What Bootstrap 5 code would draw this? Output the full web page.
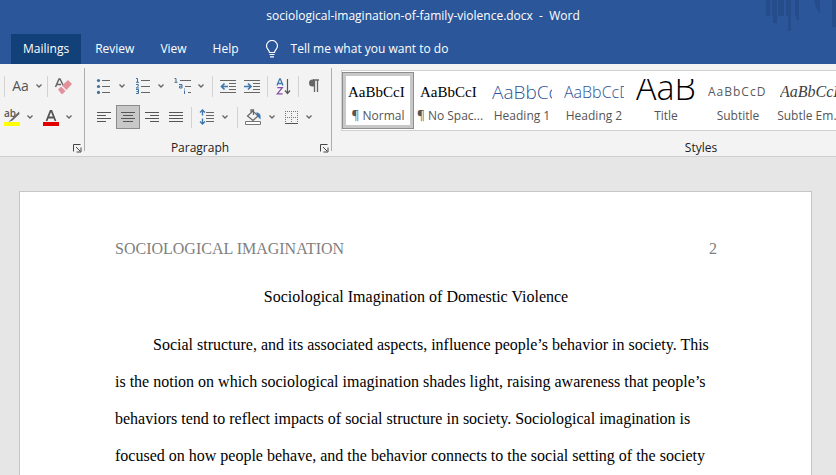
<!DOCTYPE html>
<html lang="en">
<head>
<meta charset="utf-8">
<meta name="viewport" content="width=device-width, initial-scale=1">
<title>sociological-imagination-of-family-violence.docx - Word</title>
<link href="https://cdn.jsdelivr.net/npm/bootstrap@5.3.0/dist/css/bootstrap.min.css" rel="stylesheet">
<style>
  body { font: 12px/16px "Open Sans", "Noto Sans", sans-serif; background: #e6e6e6; color: #444; }
  .app-top { background: #2b579a; color: #fff; }
  .doc-name { height: 34px; padding-left: 10px; line-height: 32px; white-space: pre; }
  .skyline { position: absolute; top: 0; right: 0; }
  .tab-row { padding-left: 11px; gap: 2px; }
  .tab-row .nav-link { color: #fff; line-height: 30px; padding: 0 12px; border-radius: 0; }
  .tab-row .nav-link.active { background: #124078; color: #fff; }
  .tell-me { border: 0; background: none; color: #fff; padding: 0 0 0 12px; gap: 12px; line-height: 30px; }
  .ribbon { background: #f3f3f3; border-bottom: 1px solid #cfcfcf; height: 93px; }
  .tool-group { padding-top: 10px; }
  .tool-rows { gap: 7px; }
  .font-group { width: 84px; }
  .para-group { width: 246px; }
  .para-group .tool-rows { padding-left: 7px; }
  .group-rule { width: 1px; background: #adadad; margin: 4px 0 5px; flex: none; }
  .tool-rule { width: 1px; height: 21px; background: #d2d2d2; margin: 0 3px; }
  .tool { width: 24px; height: 24px; border: 1px solid transparent; background: none; padding: 0; color: #555; display: flex; align-items: center; justify-content: center; flex: none; }
  .tool.pressed { background: #c8c8c8; border-color: #8c8c8c; }
  .tool-drop { width: 39px; justify-content: flex-start; padding-left: 3px; gap: 6px; }
  .case-text { font-size: 14px; width: 17px; }
  .tool svg, .launcher svg { display: block; flex: none; }
  .group-foot { padding-top: 10px; color: #222; line-height: 18px; }
  .launcher { position: absolute; right: 2px; top: 15px; border: 0; padding: 0; background: none; }
  .styles-group { flex: 0 0 738px; padding-top: 6px; }
  .gallery { background: #fff; border: 1px solid #d0d0d0; margin-left: 9px; padding: 1px 0; }
  .style-item { width: 72px; height: 57px; border: 1px solid transparent; background: none; padding: 6px 5px 4px; flex: none; color: #555; }
  .style-item.chosen { border-color: #8e8e8e; box-shadow: inset 0 0 0 3px #c8c8c8; }
  .sample { display: block; height: 26px; overflow: hidden; line-height: 26px; white-space: nowrap; text-align: left; }
  .style-name { display: block; white-space: nowrap; line-height: 22px; margin: 0 -5px; }
  .s-serif { font: 15px/26px "Liberation Serif", serif; color: #000; }
  .s-h1 { font: 300 19px/26px "Open Sans", sans-serif; color: #2f5496; }
  .s-h2 { font: 300 16px/26px "Open Sans", sans-serif; color: #2f5496; }
  .s-title { font: 300 34px/16px "Open Sans", sans-serif; color: #000; }
  .s-sub { font-size: 12px; letter-spacing: 1px; color: #5a5a5a; }
  .s-em { font: italic 16px/26px "Liberation Serif", serif; color: #404040; }
  .styles-foot { line-height: 18px; padding-top: 8px; color: #222; }
  .sheet { background: #fff; border: 1px solid #c6c6c6; border-bottom: 0; margin: 34px 24px 0 19px; padding: 46px 94px 0 95px; color: #000; font: 16px/37px "Liberation Serif", "Times New Roman", serif; }
  .running-head { color: #808080; line-height: 22px; margin-bottom: 18px; }
  .sheet h1 { font: inherit; margin: 0 0 11px; }
  .sheet p { text-indent: 38px; margin: 0; }
</style>
<script src="https://cdn.jsdelivr.net/npm/bootstrap@5.3.0/dist/js/bootstrap.bundle.min.js"></script>
</head>
<body>
<svg class="d-none" aria-hidden="true">
  <symbol id="caret" viewBox="0 0 8 8"><path d="M1.5 2.5 4 5l2.500-2.500" fill="none" stroke="#666" stroke-width="1.300"/></symbol>
  <symbol id="launch" viewBox="0 0 9 9"><path d="M.5 7.500V.5H7.500M3 3l4 4M8 3.500V8H3.500" fill="none" stroke="#444"/></symbol>
</svg>
<div class="vh-100 d-flex flex-column overflow-hidden">
  <header class="app-top position-relative">
    <svg class="skyline" width="72" height="34" fill="#264d8b" aria-hidden="true"><path d="M2 0h4v16H2zM8 0h5v23H9v-7H8zM14 0h6v16h-6zM22 0h5v31h-3V16h-2zM31 0h4v20h-3v-4h-1zM50 0h6v14l-4-6zM68 0h4v27h-4z"/></svg>
    <div class="doc-name text-center">sociological-imagination-of-family-violence.docx  -  Word</div>
    <nav class="tab-row nav">
      <a class="nav-link active" href="#" aria-current="page">Mailings</a>
      <a class="nav-link" href="#">Review</a>
      <a class="nav-link" href="#">View</a>
      <a class="nav-link" href="#">Help</a>
      <button type="button" class="tell-me d-flex align-items-center">
        <svg width="14" height="18" viewBox="0 0 14 18" fill="none" stroke="#fff" stroke-width="1.200" aria-hidden="true"><path d="M4.500 12.500c0-2.500-3-3.500-3-6.500a5.500 5.500 0 0 1 11 0c0 3-3 4-3 6.500zM4.500 14.500h5M5 16.800h4"/></svg>
        <span>Tell me what you want to do</span>
      </button>
    </nav>
  </header>

  <section class="ribbon d-flex overflow-hidden flex-shrink-0" aria-label="Ribbon">
    <div class="tool-group font-group flex-shrink-0">
      <div class="tool-rows d-flex flex-column">
        <div class="d-flex align-items-center">
          <span class="ps-1"></span><span class="tool-rule ms-0"></span>
          <button type="button" class="tool tool-drop" aria-label="Change case"><span class="case-text">Aa</span><svg width="8" height="8"><use href="#caret"/></svg></button>
          <span class="tool-rule ms-0"></span>
          <button type="button" class="tool" aria-label="Clear formatting"><svg width="18" height="16" viewBox="0 0 18 16"><path d="M1.500 9 5 1h1l3 6M3 6.500h4" fill="none" stroke="#666" stroke-width="1.500"/><path d="m4 11.500 3-3 4.500 4.500-3 3h-1zM8 7.500l6-5.500 4 4-5.500 6z" fill="#e2909b"/></svg></button>
        </div>
        <div class="d-flex align-items-center">
          <button type="button" class="tool tool-drop" aria-label="Text highlight colour"><svg width="16" height="17" viewBox="0 0 16 17"><path d="M0 13h16v4H0z" fill="#ff0"/><text x="0" y="8" font-size="10" font-weight="600" fill="#555">ab</text><path d="m15 2.500-6 6-4.500 4.500 4-1.500L15.500 5z" fill="#666"/></svg><svg width="8" height="8"><use href="#caret"/></svg></button>
          <button type="button" class="tool tool-drop" aria-label="Font colour"><svg width="16" height="17" viewBox="0 0 16 17"><path d="M0 13h16v4H0z" fill="#e00000"/><path d="M3.500 12 7.500 2h1L12.500 12M5 8.500h6" fill="none" stroke="#555" stroke-width="1.800"/></svg><svg width="8" height="8"><use href="#caret"/></svg></button>
        </div>
      </div>
      <div class="group-foot position-relative">&nbsp;<button type="button" class="launcher" aria-label="Font settings"><svg width="9" height="9"><use href="#launch"/></svg></button></div>
    </div>
    <div class="group-rule"></div>

    <div class="tool-group para-group flex-shrink-0">
      <div class="tool-rows d-flex flex-column">
        <div class="d-flex align-items-center">
          <button type="button" class="tool tool-drop" aria-label="Bullets"><svg width="16" height="16" viewBox="0 0 16 16"><path d="M6 2.500h8M6 8.500h8M6 14.500h8" stroke="#666"/><g fill="#41719c"><circle cx="2.500" cy="2.500" r="1.600"/><circle cx="2.500" cy="8.500" r="1.600"/><circle cx="2.500" cy="14.400" r="1.600"/></g></svg><svg width="8" height="8"><use href="#caret"/></svg></button>
          <button type="button" class="tool tool-drop" aria-label="Numbering"><svg width="16" height="16" viewBox="0 0 16 16"><path d="M6 2.500h9M6 8.500h9M6 14.500h9" stroke="#666"/><path d="M1 .5h1.500V4M1 4.300h3M1 6.500h2.300v1.700L1.200 10H4M1 11.500h2.500v4H1M1.500 13.500h2" fill="none" stroke="#41719c"/></svg><svg width="8" height="8"><use href="#caret"/></svg></button>
          <button type="button" class="tool tool-drop" aria-label="Multilevel list"><svg width="17" height="16" viewBox="0 0 17 16"><path d="M6 2.500h11M11 8.500h6M14 14.500h3" stroke="#666"/><path d="M.5 .5H2V4M.5 4.300h3M5 6.500h3V10H5.500V8.200H8M10.500 12.500V16M10.500 10.500v1" fill="none" stroke="#41719c"/></svg><svg width="8" height="8"><use href="#caret"/></svg></button>
          <span class="tool-rule"></span>
          <button type="button" class="tool" aria-label="Decrease indent"><svg width="16" height="16" viewBox="0 0 16 16"><path d="M0 2.500h16M9 5.500h7M9 8.500h7M9 11.500h7M0 14.500h16" stroke="#666"/><path d="M8 8.500H1.500M4.500 5.500l-3 3 3 3" fill="none" stroke="#3f78ad" stroke-width="1.700"/></svg></button>
          <button type="button" class="tool" aria-label="Increase indent"><svg width="16" height="16" viewBox="0 0 16 16"><path d="M0 2.500h16M9 5.500h7M9 8.500h7M9 11.500h7M0 14.500h16" stroke="#666"/><path d="M0 8.500h6.500M4 5.500l3 3-3 3" fill="none" stroke="#3f78ad" stroke-width="1.700"/></svg></button>
          <span class="tool-rule"></span>
          <button type="button" class="tool" aria-label="Sort"><svg width="15" height="17" viewBox="0 0 15 17" fill="none"><path d="M1 7.500 3.700.8h.6L7 7.500M2 5.500h4" stroke="#3f78ad" stroke-width="1.300"/><path d="M1.300 9.600h5L1.300 15.800h5.400" stroke="#8a4fa8" stroke-width="1.300"/><path d="M11.500 1v14M9 12.500l2.500 3 2.500-3" stroke="#555" stroke-width="1.200"/></svg></button>
          <span class="tool-rule"></span>
          <button type="button" class="tool" aria-label="Show paragraph marks"><svg width="12" height="14" viewBox="0 0 12 14"><path d="M5 1h6M6.500 1v12M9.500 1v12" fill="none" stroke="#666" stroke-width="1.300"/><path d="M6 .4H4.500a3.300 3.300 0 0 0 0 7H6z" fill="#666"/></svg></button>
        </div>
        <div class="d-flex align-items-center">
          <button type="button" class="tool" aria-label="Align left"><svg width="14" height="12" viewBox="0 0 14 12" stroke="#555"><path d="M0 1.500h14M0 4.500h9M0 7.500h14M0 10.500h9"/></svg></button>
          <button type="button" class="tool pressed" aria-label="Center" aria-pressed="true"><svg width="14" height="12" viewBox="0 0 14 12" stroke="#555"><path d="M0 1.500h14M2 4.500h10M0 7.500h14M2 10.500h10"/></svg></button>
          <button type="button" class="tool" aria-label="Align right"><svg width="14" height="12" viewBox="0 0 14 12" stroke="#555"><path d="M0 1.500h14M5 4.500h9M0 7.500h14M5 10.500h9"/></svg></button>
          <button type="button" class="tool" aria-label="Justify"><svg width="14" height="12" viewBox="0 0 14 12" stroke="#555"><path d="M0 1.500h14M0 4.500h14M0 7.500h14M0 10.500h14"/></svg></button>
          <span class="tool-rule"></span>
          <button type="button" class="tool tool-drop" aria-label="Line spacing"><svg width="16" height="16" viewBox="0 0 16 16"><path d="M7 3.500h8M7 6.500h8M7 9.500h8M7 12.500h8" stroke="#666"/><path d="M3.500 1v5.500M3.500 9.500V15M1 3.500 3.500 1 6 3.500M1 12.500 3.500 15 6 12.500" fill="none" stroke="#3f78ad" stroke-width="1.400"/></svg><svg width="8" height="8"><use href="#caret"/></svg></button>
          <span class="tool-rule"></span>
          <button type="button" class="tool tool-drop" aria-label="Shading"><svg width="17" height="16" viewBox="0 0 17 16" fill="none"><path d="M.5 12.500h15v3H.5z" stroke="#777" fill="#fff"/><path d="M2.500 7 8 2l5 5-5 4.500zM6 4V.8h2.500V6" stroke="#666" stroke-width="1.200"/><path d="M11 3.500c4 0 5 2 4.500 7L13 8z" fill="#3f78ad"/></svg><svg width="8" height="8"><use href="#caret"/></svg></button>
          <button type="button" class="tool tool-drop" aria-label="Borders"><svg width="15" height="15" viewBox="0 0 15 15"><path d="M1 1.500h13M1 7.500h13M1.500 1v13M7.500 1v13M13.500 1v13" stroke="#777" stroke-dasharray="1 1"/><path d="M1 13.500h13" stroke="#555"/></svg><svg width="8" height="8"><use href="#caret"/></svg></button>
        </div>
      </div>
      <div class="group-foot position-relative text-center"><span class="pe-3">Paragraph</span><button type="button" class="launcher" aria-label="Paragraph settings"><svg width="9" height="9"><use href="#launch"/></svg></button></div>
    </div>
    <div class="group-rule"></div>

    <div class="styles-group">
      <div class="gallery d-flex">
        <button type="button" class="style-item chosen"><span class="sample s-serif">AaBbCcI</span><span class="style-name">¶ Normal</span></button>
        <button type="button" class="style-item"><span class="sample s-serif">AaBbCcI</span><span class="style-name">¶ No Spac...</span></button>
        <button type="button" class="style-item"><span class="sample s-h1">AaBbCc</span><span class="style-name">Heading 1</span></button>
        <button type="button" class="style-item"><span class="sample s-h2">AaBbCcD</span><span class="style-name">Heading 2</span></button>
        <button type="button" class="style-item"><span class="sample s-title">AaB</span><span class="style-name">Title</span></button>
        <button type="button" class="style-item"><span class="sample s-sub">AaBbCcD</span><span class="style-name">Subtitle</span></button>
        <button type="button" class="style-item"><span class="sample s-em">AaBbCcI</span><span class="style-name">Subtle Em...</span></button>
      </div>
      <div class="styles-foot text-center">Styles</div>
    </div>
  </section>

  <main class="flex-grow-1 d-flex flex-column overflow-hidden">
    <article class="sheet flex-grow-1">
      <div class="running-head d-flex justify-content-between"><span>SOCIOLOGICAL IMAGINATION</span><span>2</span></div>
      <h1 class="text-center">Sociological Imagination of Domestic Violence</h1>
      <p>Social structure, and its associated aspects, influence people’s behavior in society. This is the notion on which sociological imagination shades light, raising awareness that people’s behaviors tend to reflect impacts of social structure in society. Sociological imagination is focused on how people behave, and the behavior connects to the social setting of the society</p>
    </article>
  </main>
</div>
</body>
</html>
